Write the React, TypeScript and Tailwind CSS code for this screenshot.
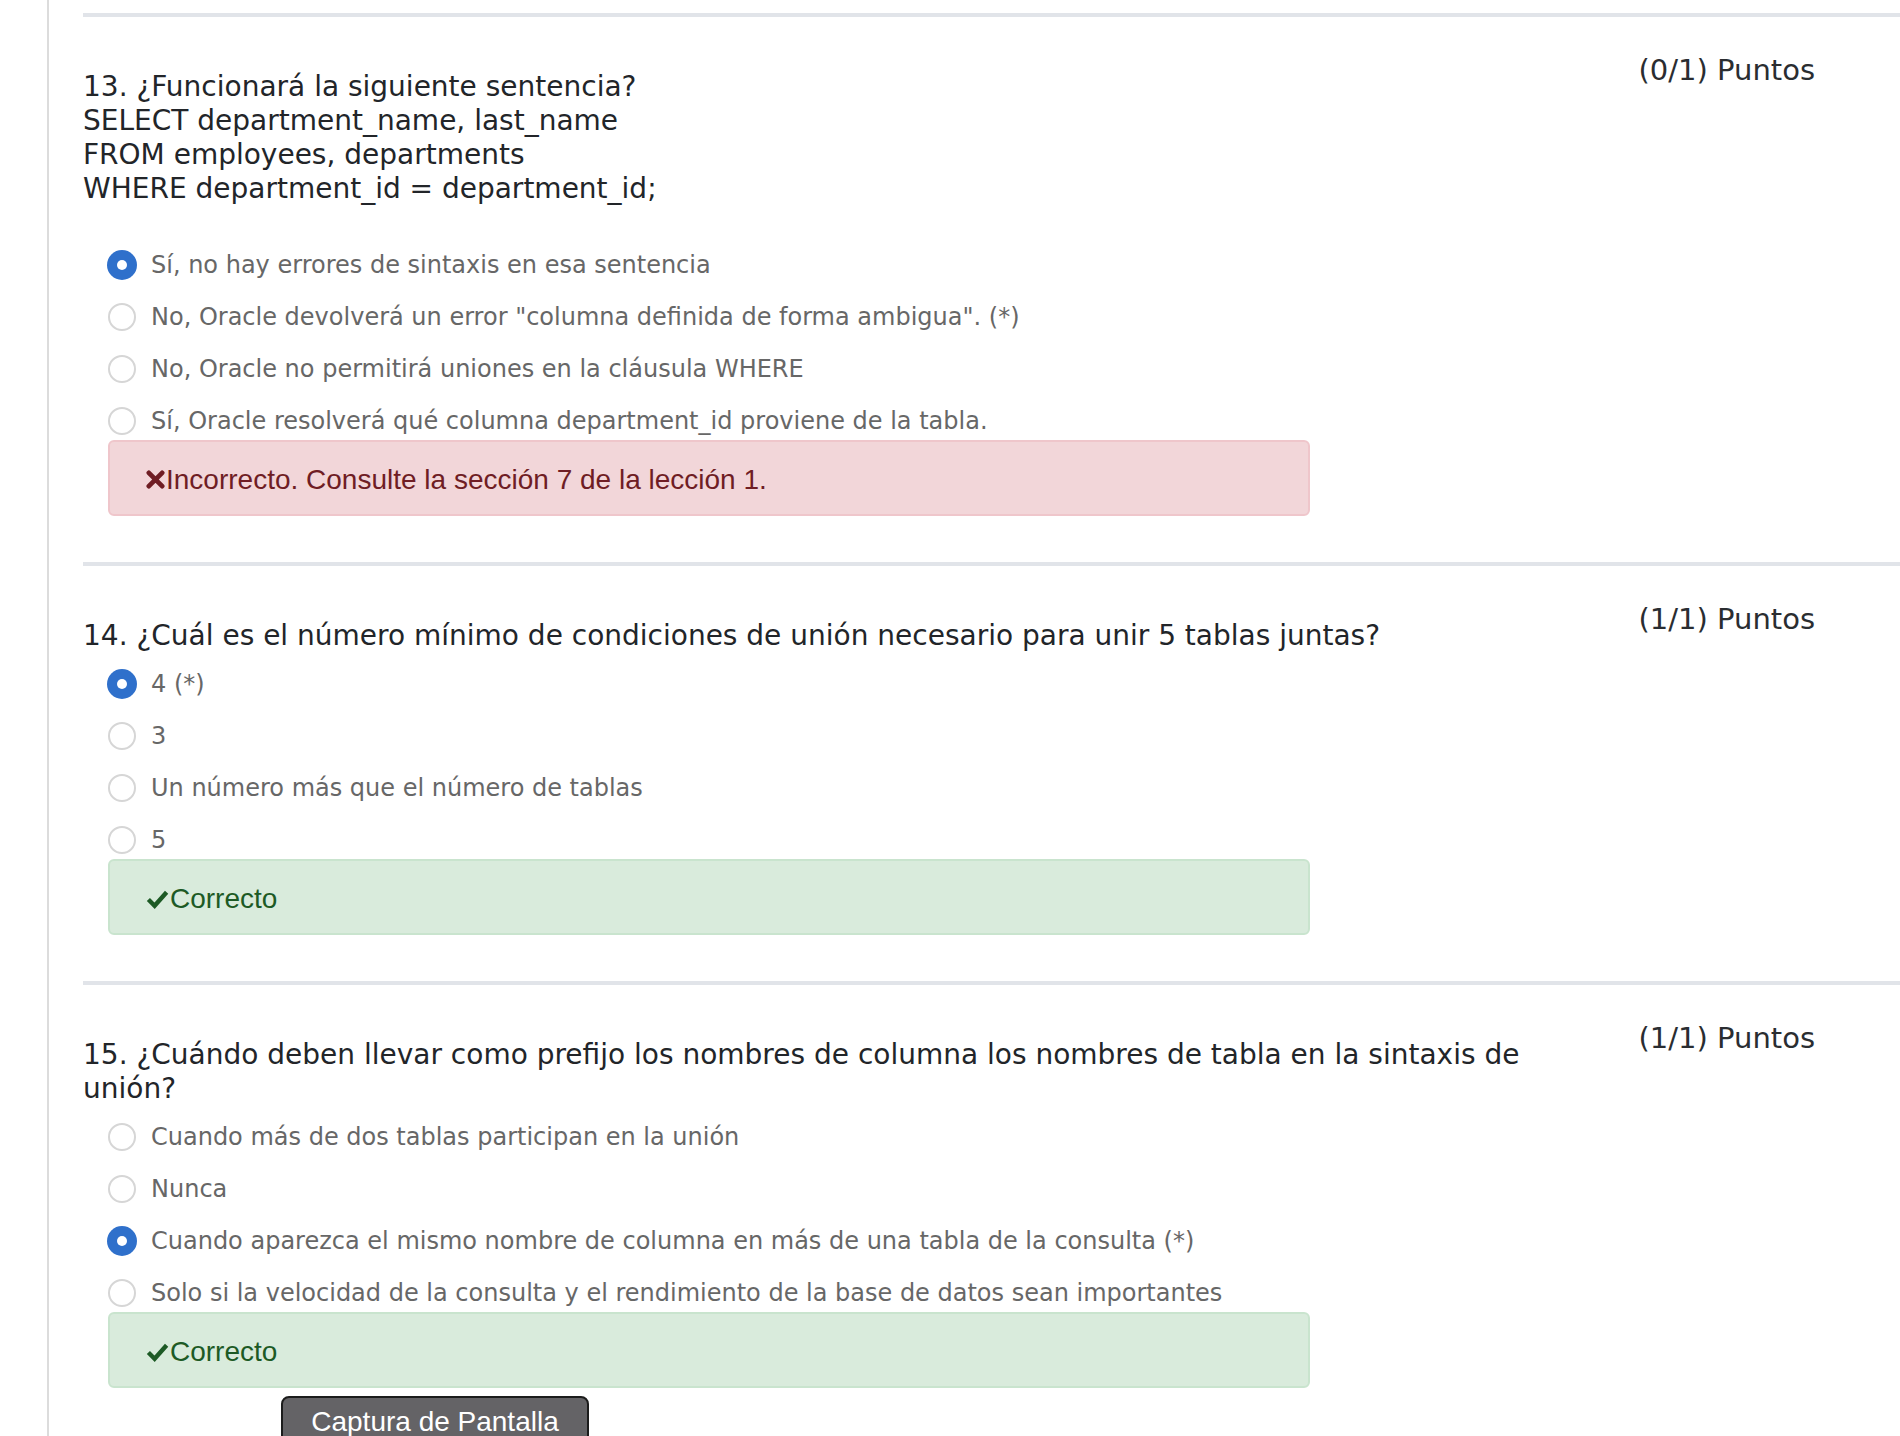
type Option = { text: string; checked?: boolean };

type Question = {
  points: string;
  lines: string[];
  spacer?: boolean;
  options: Option[];
  correct: boolean;
  feedback: string;
};

const questions: Question[] = [
  {
    points: '(0/1) Puntos',
    lines: [
      '13. ¿Funcionará la siguiente sentencia?',
      'SELECT department_name, last_name',
      'FROM employees, departments',
      'WHERE department_id = department_id;',
    ],
    spacer: true,
    options: [
      { text: 'Sí, no hay errores de sintaxis en esa sentencia', checked: true },
      { text: 'No, Oracle devolverá un error "columna definida de forma ambigua". (*)' },
      { text: 'No, Oracle no permitirá uniones en la cláusula WHERE' },
      { text: 'Sí, Oracle resolverá qué columna department_id proviene de la tabla.' },
    ],
    correct: false,
    feedback: 'Incorrecto. Consulte la sección 7 de la lección 1.',
  },
  {
    points: '(1/1) Puntos',
    lines: ['14. ¿Cuál es el número mínimo de condiciones de unión necesario para unir 5 tablas juntas?'],
    options: [
      { text: '4 (*)', checked: true },
      { text: '3' },
      { text: 'Un número más que el número de tablas' },
      { text: '5' },
    ],
    correct: true,
    feedback: 'Correcto',
  },
  {
    points: '(1/1) Puntos',
    lines: [
      '15. ¿Cuándo deben llevar como prefijo los nombres de columna los nombres de tabla en la sintaxis de unión?',
    ],
    options: [
      { text: 'Cuando más de dos tablas participan en la unión' },
      { text: 'Nunca' },
      { text: 'Cuando aparezca el mismo nombre de columna en más de una tabla de la consulta (*)', checked: true },
      { text: 'Solo si la velocidad de la consulta y el rendimiento de la base de datos sean importantes' },
    ],
    correct: true,
    feedback: 'Correcto',
  },
];

function Radio({ checked }: { checked?: boolean }) {
  return (
    <div className="w-[30px] h-[30px] flex items-center justify-center shrink-0">
      {checked ? (
        <div className="w-[30px] h-[30px] rounded-full bg-[#2f70cb] flex items-center justify-center">
          <div className="w-[10px] h-[10px] rounded-full bg-white" />
        </div>
      ) : (
        <div className="w-[28px] h-[28px] rounded-full border-2 border-[#d6d6d6] bg-white" />
      )}
    </div>
  );
}

// heavy check / heavy x, drawn like the glyph icons of the quiz
function CheckIcon() {
  return (
    <svg viewBox="0 0 24 20" className="w-[23px] h-[20px] mr-[1px]" fill="none">
      <path d="M2.5 10.5 L9 17 L21.5 3" stroke="currentColor" strokeWidth="4.6" strokeLinejoin="miter" />
    </svg>
  );
}

function CrossIcon() {
  return (
    <svg viewBox="0 0 20 20" className="w-[19px] h-[19px] mr-[1px]" fill="none">
      <path d="M3 3 L17 17 M17 3 L3 17" stroke="currentColor" strokeWidth="5" strokeLinecap="round" />
    </svg>
  );
}

function Feedback({ correct, text }: { correct: boolean; text: string }) {
  return (
    <div
      className={`ml-[25px] w-[1202px] h-[76px] rounded-[6px] border-2 flex items-center pl-[36px] pt-[3px] text-[28px] font-['Liberation_Sans',Arial,sans-serif] ${
        correct
          ? 'bg-[#d9ebdc] border-[#c9e4ce] text-[#1d5a25]'
          : 'bg-[#f2d6d9] border-[#efc6cb] text-[#6f1d24]'
      }`}
    >
      {correct ? <CheckIcon /> : <CrossIcon />}
      <span>{text}</span>
    </div>
  );
}

function QuestionBlock({ q, last }: { q: Question; last?: boolean }) {
  return (
    <div className={`border-t-4 border-[#e1e4e9] ${last ? 'pb-0' : 'pb-[46px]'}`}>
      <div className="flex items-start justify-between">
        <div className="w-[1480px] pt-[53px]">
          <div className="text-[28px] leading-[34px] text-[#222529]">
            {q.lines.map((line, i) => (
              <div key={i}>{line}</div>
            ))}
          </div>
          {q.spacer && <div className="h-[28px]" />}
          <div className="mt-[12px] flex flex-col gap-[14px]">
            {q.options.map((o, i) => (
              <div key={i} className="h-[38px] flex items-center ml-[24px] gap-[14px]">
                <Radio checked={o.checked} />
                <span className="text-[24px] text-[#676767] whitespace-nowrap">{o.text}</span>
              </div>
            ))}
          </div>
        </div>
        <div className="pt-[36px] pr-[85px] text-[29px] leading-[34px] text-[#2a2d31] whitespace-nowrap">
          {q.points}
        </div>
      </div>
      <Feedback correct={q.correct} text={q.feedback} />
    </div>
  );
}

export default function App() {
  return (
    <div className="min-h-screen bg-white overflow-hidden font-['DejaVu_Sans',Verdana,sans-serif]">
      <div className="ml-[47px] border-l-2 border-[#dcdcdc] pl-[34px] pt-[13px] min-h-[1436px]">
        {questions.map((q, i) => (
          <QuestionBlock key={i} q={q} last={i === questions.length - 1} />
        ))}
        <div className="mt-[8px] ml-[198px]">
          <button className="w-[308px] h-[60px] rounded-[8px] border-2 border-[#1c1c1c] bg-[#646366] text-white text-[28px] leading-[32px] flex justify-center items-start font-['Liberation_Sans',Arial,sans-serif]">
            <span className="pt-[8px]">Captura de Pantalla</span>
          </button>
        </div>
      </div>
    </div>
  );
}
